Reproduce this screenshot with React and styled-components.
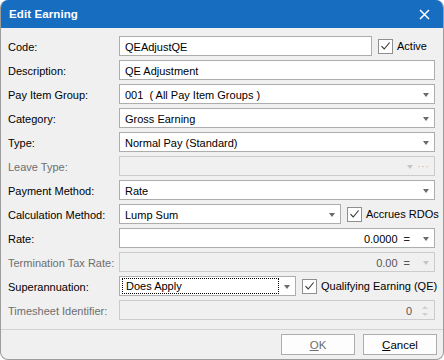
import React from "react";
import styled, { createGlobalStyle } from "styled-components";

const Global = createGlobalStyle`
  html, body {
    margin: 0;
    padding: 0;
    background: #ffffff;
  }
  body {
    font-family: "Liberation Sans", Arial, sans-serif;
    font-size: 11px;
    color: #000;
  }
`;

const Dialog = styled.div`
  width: 444px;
  height: 360px;
  box-sizing: border-box;
  display: flex;
  flex-direction: column;
  background: #f0f0f0;
  border: 1px solid #9c9c9c;
  border-top: none;
  border-radius: 8px;
  overflow: hidden;
`;

const TitleBar = styled.div`
  height: 28px;
  flex: none;
  display: flex;
  align-items: center;
  justify-content: space-between;
  background: #176dc0;
  color: #fff;
  padding: 0 14px 0 9px;
  margin: 0 -1px;
`;

const Title = styled.span`
  font-weight: bold;
  font-size: 11.5px;
  letter-spacing: 0.1px;
`;

const Body = styled.div`
  display: grid;
  grid-template-columns: 112px 1fr;
  grid-auto-rows: 20px;
  row-gap: 4px;
  padding: 8px 8px 9px 6px;
  border-bottom: 1px solid #d2d2d2;
`;

const Label = styled.div`
  display: flex;
  align-items: center;
  padding: 1px 0 0 1px;
  color: ${(p) => (p.disabled ? "#6e6e6e" : "#000")};
`;

const Field = styled.div`
  display: flex;
  align-items: center;
  min-width: 0;
`;

const Box = styled.div`
  flex: 1;
  height: 20px;
  box-sizing: border-box;
  display: flex;
  align-items: center;
  padding: 1px 4px 0 5px;
  border: 1px solid ${(p) => (p.disabled ? "#cccccc" : "#adadad")};
  background: ${(p) => (p.disabled ? "#f0f0f0" : "#ffffff")};
  color: ${(p) => (p.disabled ? "#555" : "#000")};
  min-width: 0;
`;

const Value = styled.span`
  flex: 1;
  white-space: nowrap;
  overflow: hidden;
  text-align: ${(p) => (p.right ? "right" : "left")};
`;

const Focus = styled.span`
  flex: 1;
  height: 16px;
  display: flex;
  align-items: center;
  margin: -1px 0 0 -3px;
  padding-left: 3px;
  border: 1px dotted #000;
  box-sizing: border-box;
`;

const Caret = styled.span`
  flex: none;
  width: 0;
  height: 0;
  margin: 0 1px 0 5px;
  border-left: 3.5px solid transparent;
  border-right: 3.5px solid transparent;
  border-top: 4px solid ${(p) => (p.muted ? "#c4c4c4" : "#6a6a6a")};
`;

const Equals = styled.span`
  flex: none;
  margin: 0 8px 0 6px;
  color: ${(p) => (p.muted ? "#555" : "#222")};
`;

const Dots = styled.span`
  flex: none;
  margin: 0 1px 0 4px;
  color: #b8b8b8;
  font-size: 10px;
  letter-spacing: 0.5px;
  line-height: 1;
`;

const Spin = styled.span`
  flex: none;
  display: flex;
  flex-direction: column;
  gap: 4px;
  margin: 0 2px 0 10px;
`;

const SpinArrow = styled.span`
  width: 0;
  height: 0;
  border-left: 3px solid transparent;
  border-right: 3px solid transparent;
  ${(p) =>
    p.up
      ? "border-bottom: 3px solid #cfcfcf;"
      : "border-top: 3px solid #cfcfcf;"}
`;

const Trail = styled.div`
  flex: none;
  width: ${(p) => p.width}px;
  display: flex;
  align-items: center;
  gap: 4px;
  padding-left: 6px;
  box-sizing: border-box;
  white-space: nowrap;
`;

const Check = styled.span`
  width: 15px;
  height: 15px;
  box-sizing: border-box;
  border: 1px solid #8f8f8f;
  background: #fff;
  display: flex;
  align-items: center;
  justify-content: center;
  flex: none;
`;

const Footer = styled.div`
  display: flex;
  justify-content: flex-end;
  gap: 8px;
  padding: 4px 6px 0 0;
`;

const Button = styled.button`
  width: 74px;
  height: 21px;
  box-sizing: border-box;
  border: 1px solid #adadad;
  background: #fdfdfd;
  font-family: "Liberation Sans", Arial, sans-serif;
  font-size: 11.5px;
  color: ${(p) => (p.muted ? "#6d6d6d" : "#000")};
  padding: 0;
  & u {
    text-underline-offset: 1px;
  }
`;

const Tick = () => (
  <svg width="11" height="10" viewBox="0 0 11 10">
    <path d="M1.5 5.2 L4.2 8 L9.6 1.5" fill="none" stroke="#333" strokeWidth="1.1" />
  </svg>
);

const CloseIcon = () => (
  <svg width="11" height="11" viewBox="0 0 11 11">
    <path d="M1 1 L10 10 M10 1 L1 10" stroke="#fff" strokeWidth="1.5" />
  </svg>
);

const CheckLabel = ({ width, children }) => (
  <Trail width={width}>
    <Check>
      <Tick />
    </Check>
    <span>{children}</span>
  </Trail>
);

export default function App() {
  return (
    <>
      <Global />
      <Dialog>
        <TitleBar>
          <Title>Edit Earning</Title>
          <CloseIcon />
        </TitleBar>
        <Body>
          <Label>Code:</Label>
          <Field>
            <Box>
              <Value>QEAdjustQE</Value>
            </Box>
            <CheckLabel width={63}>Active</CheckLabel>
          </Field>

          <Label>Description:</Label>
          <Field>
            <Box>
              <Value>QE Adjustment</Value>
            </Box>
          </Field>

          <Label>Pay Item Group:</Label>
          <Field>
            <Box>
              <Value>001&nbsp; ( All Pay Item Groups )</Value>
              <Caret />
            </Box>
          </Field>

          <Label>Category:</Label>
          <Field>
            <Box>
              <Value>Gross Earning</Value>
              <Caret />
            </Box>
          </Field>

          <Label>Type:</Label>
          <Field>
            <Box>
              <Value>Normal Pay (Standard)</Value>
              <Caret />
            </Box>
          </Field>

          <Label disabled>Leave Type:</Label>
          <Field>
            <Box disabled>
              <Value />
              <Caret muted />
              <Dots>···</Dots>
            </Box>
          </Field>

          <Label>Payment Method:</Label>
          <Field>
            <Box>
              <Value>Rate</Value>
              <Caret />
            </Box>
          </Field>

          <Label>Calculation Method:</Label>
          <Field>
            <Box>
              <Value>Lump Sum</Value>
              <Caret />
            </Box>
            <CheckLabel width={94}>Accrues RDOs</CheckLabel>
          </Field>

          <Label>Rate:</Label>
          <Field>
            <Box>
              <Value right>0.0000</Value>
              <Equals>=</Equals>
              <Caret />
            </Box>
          </Field>

          <Label disabled>Termination Tax Rate:</Label>
          <Field>
            <Box disabled>
              <Value right>0.00</Value>
              <Equals muted>=</Equals>
              <Caret muted />
            </Box>
          </Field>

          <Label>Superannuation:</Label>
          <Field>
            <Box>
              <Focus>Does Apply</Focus>
              <Caret />
            </Box>
            <CheckLabel width={139}>Qualifying Earning (QE)</CheckLabel>
          </Field>

          <Label disabled>Timesheet Identifier:</Label>
          <Field>
            <Box disabled>
              <Value right>0</Value>
              <Spin>
                <SpinArrow up />
                <SpinArrow />
              </Spin>
            </Box>
          </Field>
        </Body>
        <Footer>
          <Button muted>
            <u>O</u>K
          </Button>
          <Button>
            <u>C</u>ancel
          </Button>
        </Footer>
      </Dialog>
    </>
  );
}
